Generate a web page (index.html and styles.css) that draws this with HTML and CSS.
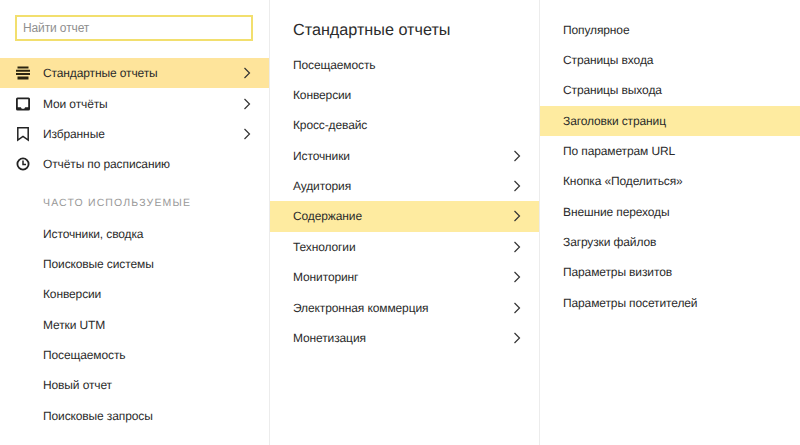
FILE: index.html
```html
<!DOCTYPE html>
<html lang="ru">
<head>
<meta charset="utf-8">
<title>Отчёты</title>
<link rel="stylesheet" href="styles.css">
</head>
<body>
<div class="menu">
  <section class="col col-main">
    <div class="search"><input class="search-input" type="text" placeholder="Найти отчет"></div>
    <ul class="list">
      <li class="row active"><svg class="ico" viewBox="0 0 16 16"><path d="M2.500 1.500h11v2h-11zM1 4.800h14v2H1zM1 8.100h14v2H1zM2.500 11.400h11v3h-11z" fill="#2a2410"/></svg><span class="label">Стандартные отчеты</span><svg class="chev" viewBox="0 0 8 14"><path d="M1.500 2 6.500 7 1.500 12" fill="none" stroke="#333" stroke-width="1.200"/></svg></li>
      <li class="row"><svg class="ico" viewBox="0 0 16 16"><path d="M2.500 1.500h11A1.500 1.500 0 0 1 15 3v10a1.500 1.500 0 0 1-1.500 1.500h-11A1.500 1.500 0 0 1 1 13V3a1.500 1.500 0 0 1 1.500-1.500zM2.800 3.300v7.900h3l1 1.500h2.400l1-1.500h3V3.300z" fill="#222" fill-rule="evenodd"/></svg><span class="label">Мои отчёты</span><svg class="chev" viewBox="0 0 8 14"><path d="M1.500 2 6.500 7 1.500 12" fill="none" stroke="#333" stroke-width="1.200"/></svg></li>
      <li class="row"><svg class="ico" viewBox="0 0 16 16"><path d="M2.800 1.800h10.400v12.200l-5.200-3.600-5.200 3.600z" fill="none" stroke="#222" stroke-width="1.500"/></svg><span class="label">Избранные</span><svg class="chev" viewBox="0 0 8 14"><path d="M1.500 2 6.500 7 1.500 12" fill="none" stroke="#333" stroke-width="1.200"/></svg></li>
      <li class="row"><svg class="ico" viewBox="0 0 16 16"><circle cx="8" cy="8" r="5.600" fill="none" stroke="#222" stroke-width="1.800"/><path d="M8 4.500V8.500H11" fill="none" stroke="#222" stroke-width="1.500"/></svg><span class="label">Отчёты по расписанию</span></li>
    </ul>
    <h3 class="caption">ЧАСТО ИСПОЛЬЗУЕМЫЕ</h3>
    <ul class="list">
      <li class="row plain">Источники, сводка</li>
      <li class="row plain">Поисковые системы</li>
      <li class="row plain">Конверсии</li>
      <li class="row plain">Метки UTM</li>
      <li class="row plain">Посещаемость</li>
      <li class="row plain">Новый отчет</li>
      <li class="row plain">Поисковые запросы</li>
    </ul>
  </section>
  <section class="col col-mid">
    <h2 class="title">Стандартные отчеты</h2>
    <ul class="list">
      <li class="row sub"><span class="label">Посещаемость</span></li>
      <li class="row sub"><span class="label">Конверсии</span></li>
      <li class="row sub"><span class="label">Кросс-девайс</span></li>
      <li class="row sub"><span class="label">Источники</span><svg class="chev" viewBox="0 0 8 14"><path d="M1.500 2 6.500 7 1.500 12" fill="none" stroke="#333" stroke-width="1.200"/></svg></li>
      <li class="row sub"><span class="label">Аудитория</span><svg class="chev" viewBox="0 0 8 14"><path d="M1.500 2 6.500 7 1.500 12" fill="none" stroke="#333" stroke-width="1.200"/></svg></li>
      <li class="row sub active"><span class="label">Содержание</span><svg class="chev" viewBox="0 0 8 14"><path d="M1.500 2 6.500 7 1.500 12" fill="none" stroke="#333" stroke-width="1.200"/></svg></li>
      <li class="row sub"><span class="label">Технологии</span><svg class="chev" viewBox="0 0 8 14"><path d="M1.500 2 6.500 7 1.500 12" fill="none" stroke="#333" stroke-width="1.200"/></svg></li>
      <li class="row sub"><span class="label">Мониторинг</span><svg class="chev" viewBox="0 0 8 14"><path d="M1.500 2 6.500 7 1.500 12" fill="none" stroke="#333" stroke-width="1.200"/></svg></li>
      <li class="row sub"><span class="label">Электронная коммерция</span><svg class="chev" viewBox="0 0 8 14"><path d="M1.500 2 6.500 7 1.500 12" fill="none" stroke="#333" stroke-width="1.200"/></svg></li>
      <li class="row sub"><span class="label">Монетизация</span><svg class="chev" viewBox="0 0 8 14"><path d="M1.500 2 6.500 7 1.500 12" fill="none" stroke="#333" stroke-width="1.200"/></svg></li>
    </ul>
  </section>
  <section class="col col-last">
    <ul class="list">
      <li class="row sub">Популярное</li>
      <li class="row sub">Страницы входа</li>
      <li class="row sub">Страницы выхода</li>
      <li class="row sub active">Заголовки страниц</li>
      <li class="row sub">По параметрам URL</li>
      <li class="row sub">Кнопка «Поделиться»</li>
      <li class="row sub">Внешние переходы</li>
      <li class="row sub">Загрузки файлов</li>
      <li class="row sub">Параметры визитов</li>
      <li class="row sub">Параметры посетителей</li>
    </ul>
  </section>
</div>
</body>
</html>
```
FILE: styles.css
```css
* { box-sizing: border-box; }
html, body { margin: 0; height: 100%; overflow: hidden; background: #fff; }
body { font-family: "Liberation Sans", Arial, sans-serif; font-size: 12px; letter-spacing: -0.120px; color: #2b2b2b; text-rendering: geometricPrecision; }
.menu { display: grid; grid-template-columns: 270px 270px 260px; height: 445px; }
.col { border-right: 1px solid #ececec; min-width: 0; }
.col-last { border-right: 0; padding-top: 14.500px; }
.col-mid { padding-top: 18px; }
.search { padding: 15px 16px 17px 15px; }
.search-input { display: block; width: 100%; height: 26px; border: 2px solid #f2df6e; outline: 0; padding: 0 6px; font: inherit; letter-spacing: inherit; background: #fff; }
.search-input::placeholder { color: #8f8f8f; opacity: 1; }
.list { list-style: none; margin: 0; padding: 0; }
.row { display: flex; align-items: center; height: 30.350px; padding-left: 15px; padding-right: 18px; white-space: nowrap; }
.row.sub { padding-left: 23px; }
.row.plain { padding-left: 43px; }
.active { background: #feeba0; }
.col-main .active { background: #fee49b; }
.ico { width: 16px; height: 16px; flex: none; margin-right: 12px; }
.label { flex: 1; }
.chev { width: 8px; height: 14px; flex: none; }
.caption { margin: 16px 0 7px 43px; font-size: 10.500px; line-height: 16px; font-weight: 400; letter-spacing: 1.150px; color: #999; }
.title { margin: 0 0 7.600px 23px; font-size: 16.200px; letter-spacing: 0; line-height: 24px; font-weight: 400; color: #2b2b2b; }
```
